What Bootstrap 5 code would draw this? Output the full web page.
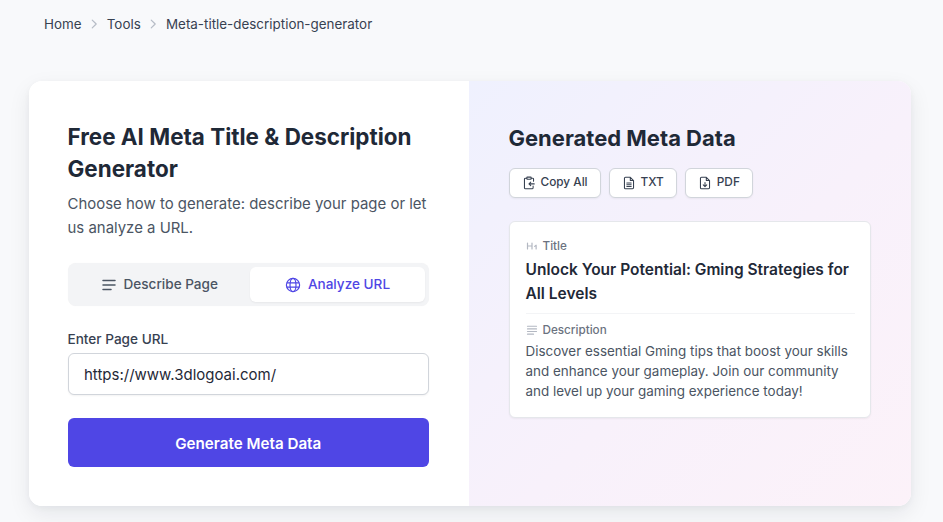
<!DOCTYPE html>
<html lang="en"><head><meta charset="utf-8"><title>Meta generator</title>
<link rel="stylesheet" href="https://cdn.jsdelivr.net/npm/bootstrap@5.3.0/dist/css/bootstrap.min.css">
<style>
html,body{height:522px;overflow:hidden}
body{background:#f8f9fb;font-family:Inter,"Liberation Sans",sans-serif;color:#1f2937}
.crumbs{padding:14px 44px 0;height:81px;font-size:13.42px;line-height:20px;color:#374151}
.crumbs svg{width:14px;height:14px;margin:0 5.600px;color:#b6bcc6}
.shell{margin:0 32px 0 29px;height:425px;border-radius:13px;overflow:hidden;box-shadow:0 8px 22px rgba(17,24,39,.08),0 2px 6px rgba(17,24,39,.04);background:#fff}
.leftpane{width:440px;padding:40px 40px 0 38.5px;background:#fff;flex:none}
.rightpane{flex:1;padding:41px 40px 0 39.5px;background:linear-gradient(135deg,#eff1fe 0%,#f8f1fb 55%,#fcf2f9 100%)}
.head1{font-size:22.45px;line-height:32px;font-weight:700;color:#1f2937;margin:0 0 7px}
.sub1{font-size:14.95px;line-height:24px;color:#4b5563;margin:0 0 23px}
.switcher{background:#f3f4f6;border-radius:8px;padding:4px;height:43px;margin-bottom:23px;box-shadow:0 0 1px rgba(0,0,0,.06)}
.swbtn{flex:1;display:flex;align-items:center;justify-content:center;gap:7px;font-size:13.55px;font-weight:500;color:#4b5563;border-radius:6px;height:35px;padding-right:3px}
.swbtn svg{width:16px;height:16px}
.swbtn.onn{flex:none;width:175px;padding-right:0;background:#fff;color:#4f46e5;box-shadow:0 1px 2px rgba(0,0,0,.05)}
.lab{font-size:13.6px;font-weight:500;line-height:20px;color:#374151;margin-bottom:4px;display:block}
.urlin{height:42px;border:1px solid #d1d5db;border-radius:6px;padding:0 15.5px;font-size:15px;color:#1f2937;box-shadow:0 1px 2px rgba(0,0,0,.05);font-family:inherit}
.genbtn{margin-top:23px;height:49px;border:0;border-radius:6px;background:#4f46e5;color:#fff;font-size:15.2px;font-weight:600;width:100%;padding:8px 12px 4px}
.genbtn:hover{background:#4338ca;color:#fff}
.head2{font-size:22px;line-height:32px;font-weight:700;color:#1f2937;margin:0 0 14px}
.actb{height:30px;padding:0 12px;display:flex;align-items:center;gap:5px;background:#fff;border:1px solid #d1d5db;border-radius:6px;font-size:11.8px;font-weight:500;color:#374151;box-shadow:0 1px 2px rgba(0,0,0,.05)}
.actb svg{width:14px;height:14px}
.result{margin-top:23px;background:#fff;border:1px solid #e5e7eb;border-radius:6px;padding:16px 15px 0 16px;height:197px;box-shadow:0 1px 2px rgba(0,0,0,.05)}
.tag1{font-size:11.7px;line-height:16px;font-weight:500;color:#6b7280;display:flex;align-items:center;gap:5px}
.tag1 svg{width:12px;height:12px;color:#b3b8c2}
.ttl{font-size:15.5px;line-height:24px;font-weight:600;color:#1f2937;margin:4px 0 7px}
.sep1{border-top:1px solid #f3f4f6;padding-top:8px}
.dsc{font-size:13.45px;line-height:20px;color:#4b5563;margin:3px 0 0}
</style></head><body>
<nav class="crumbs d-flex align-items-center align-self-start" aria-label="breadcrumb">
<div class="d-flex align-items-center align-self-start"><span>Home</span><svg viewBox="0 0 16 16" fill="none" stroke="currentColor" stroke-width="1.4" stroke-linecap="round" stroke-linejoin="round"><path d="M6 3.5 10.5 8 6 12.5"/></svg><span>Tools</span><svg viewBox="0 0 16 16" fill="none" stroke="currentColor" stroke-width="1.4" stroke-linecap="round" stroke-linejoin="round"><path d="M6 3.5 10.5 8 6 12.5"/></svg><span>Meta-title-description-generator</span></div>
</nav>
<main class="shell d-flex">
<section class="leftpane">
<h1 class="head1">Free AI Meta Title &amp; Description Generator</h1>
<p class="sub1">Choose how to generate: describe your page or let us analyze a URL.</p>
<div class="switcher d-flex">
<div class="swbtn"><svg viewBox="0 0 16 16" fill="none" stroke="currentColor" stroke-width="1.5" stroke-linecap="round"><path d="M2 3.5h12M2 8h12M2 12.500h8"/></svg>Describe Page</div>
<div class="swbtn onn"><svg viewBox="0 0 16 16" fill="none" stroke="currentColor" stroke-width="1.2"><circle cx="8" cy="8" r="6.600"/><ellipse cx="8" cy="8" rx="3" ry="6.600"/><path d="M1.800 5.800h12.400M1.800 10.200h12.400"/></svg>Analyze URL</div>
</div>
<label class="lab" for="u">Enter Page URL</label>
<input id="u" class="form-control urlin" value="https://www.3dlogoai.com/">
<button class="btn genbtn" type="button">Generate Meta Data</button>
</section>
<section class="rightpane">
<h2 class="head2">Generated Meta Data</h2>
<div class="d-flex gap-2">
<div class="actb"><svg viewBox="0 0 16 16" fill="none" stroke="currentColor" stroke-width="1.2" stroke-linecap="round" stroke-linejoin="round"><path d="M5.500 2.500H4a1.200 1.200 0 0 0-1.200 1.200v9.600A1.200 1.200 0 0 0 4 14.500h7.500a1.200 1.200 0 0 0 1.200-1.200v-1.800M10.500 2.500H12a1.200 1.200 0 0 1 1.200 1.200V6"/><rect x="5.500" y="1.300" width="5" height="2.500" rx=".6"/><path d="M14 9H8M10 7 8 9l2 2"/></svg>Copy All</div>
<div class="actb"><svg viewBox="0 0 16 16" fill="none" stroke="currentColor" stroke-width="1.2" stroke-linecap="round" stroke-linejoin="round"><path d="M9.500 1.500H4A1.200 1.200 0 0 0 2.800 2.700v10.600A1.200 1.200 0 0 0 4 14.500h8a1.200 1.200 0 0 0 1.200-1.200V5.200zM9.500 1.500v3.700h3.700M5.500 8h5M5.500 10h5M5.500 12h5"/></svg>TXT</div>
<div class="actb"><svg viewBox="0 0 16 16" fill="none" stroke="currentColor" stroke-width="1.2" stroke-linecap="round" stroke-linejoin="round"><path d="M9.500 1.500H4A1.200 1.200 0 0 0 2.800 2.700v10.600A1.200 1.200 0 0 0 4 14.500h8a1.200 1.200 0 0 0 1.200-1.200V5.200zM9.500 1.500v3.700h3.700M8 7.500v4.500M6 10.200 8 12.200l2-2"/></svg>PDF</div>
</div>
<article class="result">
<div class="tag1"><svg viewBox="0 0 16 16" fill="none" stroke="currentColor" stroke-width="1.600" stroke-linecap="round" stroke-linejoin="round"><path d="M2 4v8M8 4v8M2 8h6M11.500 8.500 13.500 7v5"/></svg>Title</div>
<div class="ttl">Unlock Your Potential: Gming Strategies for All Levels</div>
<div class="sep1">
<div class="tag1"><svg viewBox="0 0 16 16" fill="none" stroke="currentColor" stroke-width="1.600" stroke-linecap="round"><path d="M2 3h12M2 6.500h12M2 10h12M2 13.500h8"/></svg>Description</div>
<p class="dsc">Discover essential Gming tips that boost your skills and enhance your gameplay. Join our community and level up your gaming experience today!</p>
</div>
</article>
</section>
</main>
</body></html>
